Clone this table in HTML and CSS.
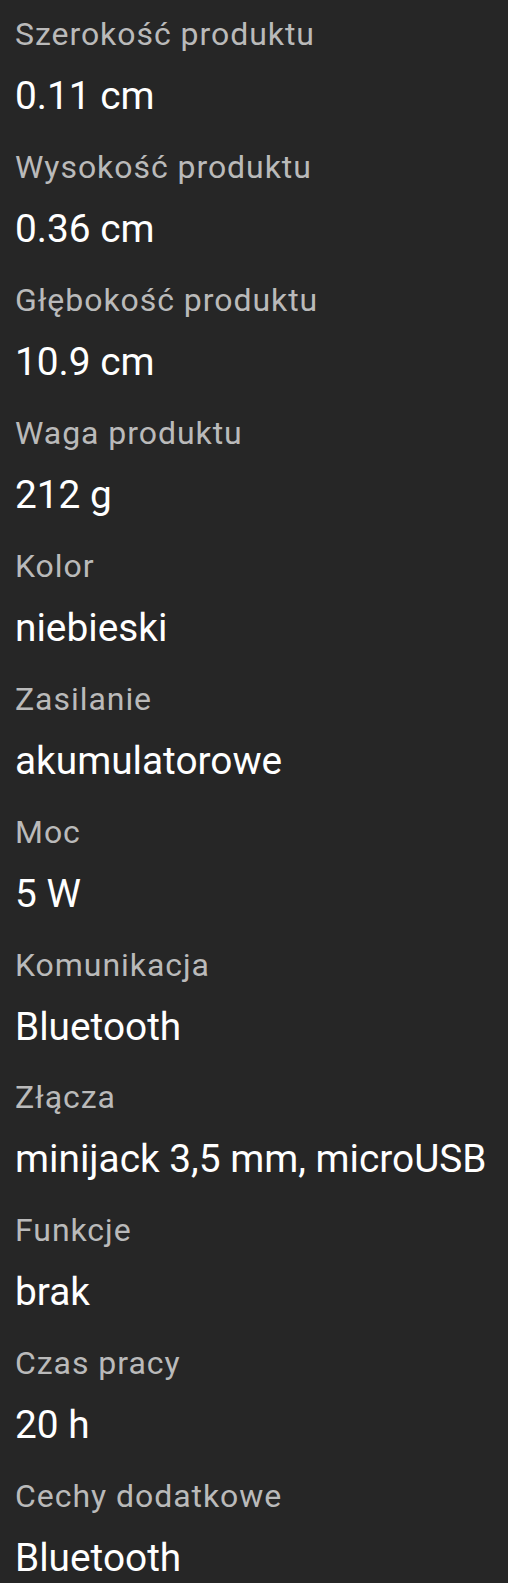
FILE: index.html
```html
<!DOCTYPE html>
<html lang="pl">
<head>
    <meta charset="UTF-8">
    <meta name="viewport" content="width=device-width, initial-scale=1.0">
    <title>Specyfikacja produktu</title>
    <link rel="stylesheet" href="styles.css">
</head>
<body>
    <div class="spec-list">
        <div class="spec-item">
            <div class="spec-label">Szerokość produktu</div>
            <div class="spec-value">0.11 cm</div>
        </div>
        <div class="spec-item">
            <div class="spec-label">Wysokość produktu</div>
            <div class="spec-value">0.36 cm</div>
        </div>
        <div class="spec-item">
            <div class="spec-label">Głębokość produktu</div>
            <div class="spec-value">10.9 cm</div>
        </div>
        <div class="spec-item">
            <div class="spec-label">Waga produktu</div>
            <div class="spec-value">212 g</div>
        </div>
        <div class="spec-item">
            <div class="spec-label">Kolor</div>
            <div class="spec-value">niebieski</div>
        </div>
        <div class="spec-item">
            <div class="spec-label">Zasilanie</div>
            <div class="spec-value">akumulatorowe</div>
        </div>
        <div class="spec-item">
            <div class="spec-label">Moc</div>
            <div class="spec-value">5 W</div>
        </div>
        <div class="spec-item">
            <div class="spec-label">Komunikacja</div>
            <div class="spec-value">Bluetooth</div>
        </div>
        <div class="spec-item">
            <div class="spec-label">Złącza</div>
            <div class="spec-value">minijack 3,5 mm, microUSB</div>
        </div>
        <div class="spec-item">
            <div class="spec-label">Funkcje</div>
            <div class="spec-value">brak</div>
        </div>
        <div class="spec-item">
            <div class="spec-label">Czas pracy</div>
            <div class="spec-value">20 h</div>
        </div>
        <div class="spec-item">
            <div class="spec-label">Cechy dodatkowe</div>
            <div class="spec-value">Bluetooth</div>
        </div>
    </div>
</body>
</html>
```

FILE: styles.css
```css
:root {
    --background-color: #262626;
    --label-color: #bababa;
    --value-color: #ffffff;
}

body {
    font-family: Roboto, 'Liberation Sans', Arial, sans-serif;
    margin: 0;
    padding: 0;
    background-color: var(--background-color);
}

.spec-list {
    padding: 4.3px 15px 0;
}

.spec-item {
    padding-bottom: 10.9px;
}

.spec-label {
    color: var(--label-color);
    font-size: 32px;
    line-height: 61px;
    letter-spacing: 0.95px;
}

.spec-value {
    color: var(--value-color);
    font-size: 38.8px;
    line-height: 61px;
    white-space: nowrap;
}
```
